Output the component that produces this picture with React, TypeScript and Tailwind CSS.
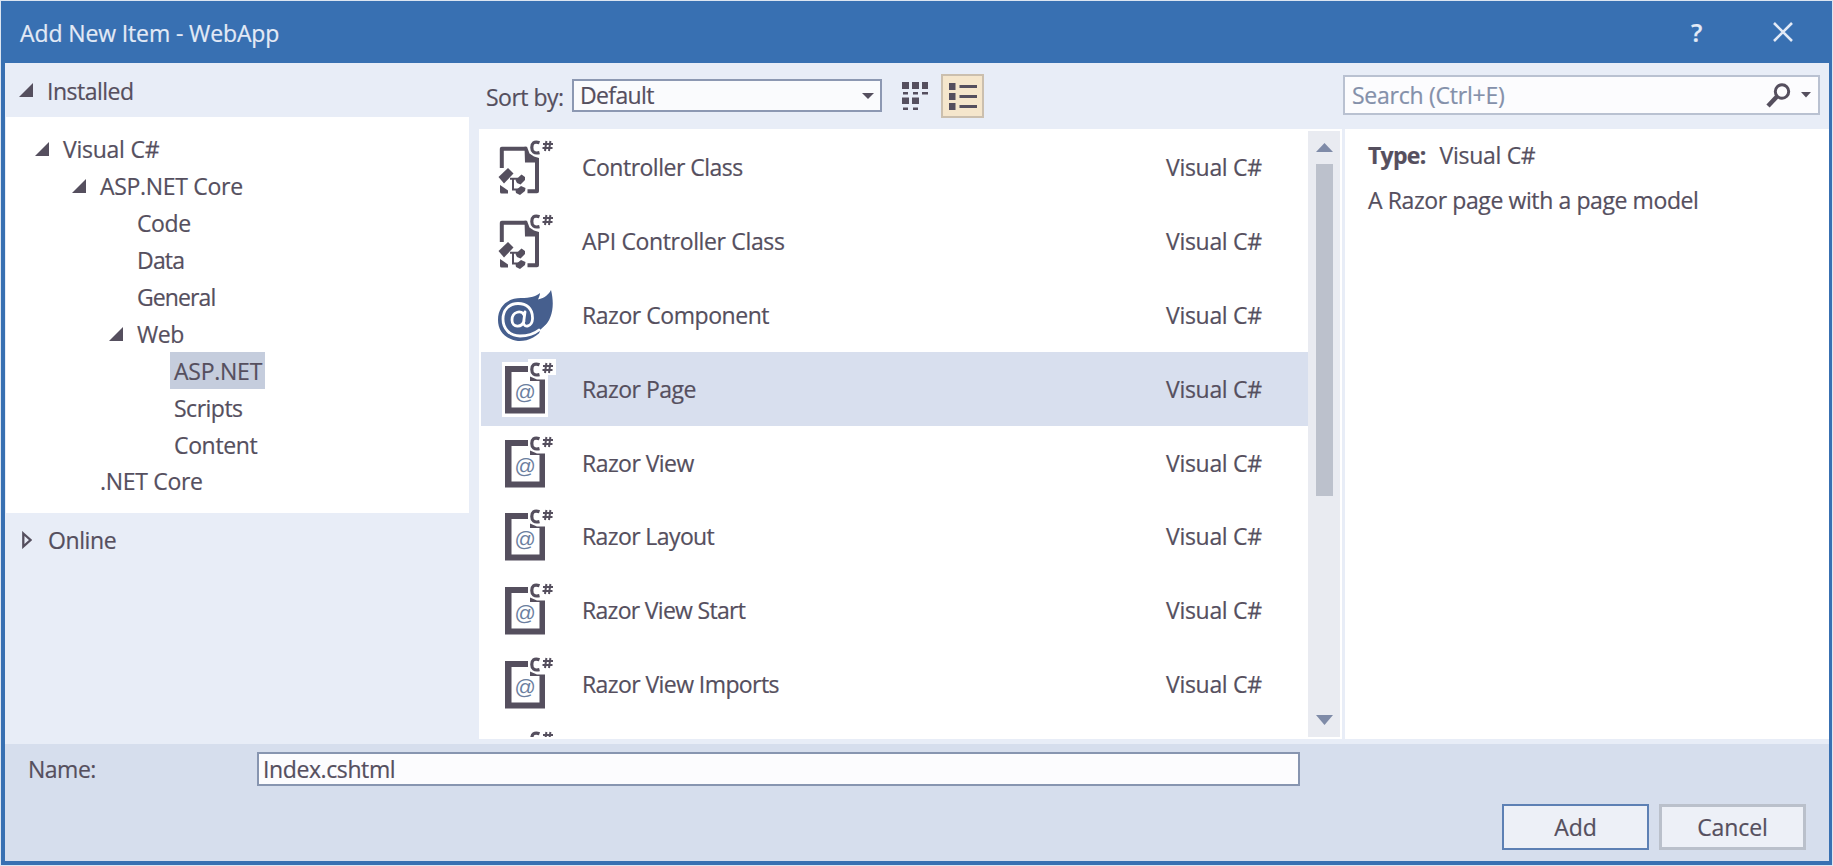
import React from "react";

const INK = "#554f5e";

function Expanded() {
  return (
    <svg className="block h-[14px] w-[14px] shrink-0" viewBox="0 0 14 14">
      <path d="M14 0V14H0Z" fill={INK} />
    </svg>
  );
}

function CSharp() {
  return (
    <g stroke={INK} fill="none">
      <path d="M45.500 11.700C40 9.700 37.800 12.500 37.800 16.500S40 23 45.500 21.600" strokeWidth="3.200" />
      <path d="M52.400 10L51 20M56.400 10L55 20M49 12.900H59M48.500 17H58.500" strokeWidth="2" />
    </g>
  );
}

function ControllerIcon() {
  return (
    <svg className="block h-[73px] w-[64px]" viewBox="0 0 64 73">
      <path d="M7.800 37V17.800H32" fill="none" stroke={INK} strokeWidth="4" strokeLinejoin="round" />
      <path d="M30.500 15.800H33L35.500 22.500L40 25.500L45 27V31.500H31Z" fill={INK} />
      <path d="M43 29V60.300H33.500" fill="none" stroke={INK} strokeWidth="4" strokeLinejoin="round" />
      <path d="M6 54L9 56L14 59.500V62.500H7.500Q6 62.500 6 61Z" fill={INK} />
      <path d="M4.500 46L14 37L19.500 42.500L10 52.500Z" fill={INK} />
      <path d="M16 47.800H24M19 48V58.500H25" fill="none" stroke={INK} strokeWidth="2" />
      <path d="M21.500 49L27.500 43.500L31 46V49L26.500 53.500L23 52ZM21.500 59.500L27 55L31.500 57L31 60L26 64L22 62Z" fill={INK} />
      <CSharp />
    </svg>
  );
}

function ComponentIcon() {
  return (
    <svg className="block h-[73px] w-[64px]" viewBox="0 0 64 73">
      <path
        d="M57 11C61 27 58 40 50 48C44 58 34 62.500 24 62C11 60 4 52 4 41C4 27 14 19 27 19C36 19 43 17 46 14C46 16 45 18 44 20.500C51 19 55 15 57 11Z"
        fill="#465f8e"
      />
      <g fill="none" stroke="#fff" strokeWidth="2.800" strokeLinecap="round">
        <path d="M30 36C28 31 18 32 18 41C18 49 28 49 30 42M31 33L29.500 44C30 49 38 48 38.500 40C39 29 32 24.500 24 24.500C15 24.500 9 31 9 40C9 50 16 57 26 57C34 57 40 55 45 51" />
      </g>
      <path d="M57 41C54 49 49 53 45 56L46 51Z" fill="#fff" />
    </svg>
  );
}

function PageIcon({ halo = false }: { halo?: boolean }) {
  return (
    <svg className="block h-[73px] w-[64px]" viewBox="0 0 64 73">
      {halo && <path d="M8 9H34V6H62V22H54V64H8Z" fill="#fff" />}
      <path d="M34 13H11V60.500H51V26.500H43L36 23.500V28H45.500V54.500H17.500V19H34Z" fill={INK} />
      <text x="20.500" y="45.500" fontSize="21" fill="#6c7f9f" fontFamily="Liberation Sans, sans-serif">@</text>
      <CSharp />
    </svg>
  );
}

function PlainIcon() {
  return (
    <svg className="block h-[73px] w-[64px]" viewBox="0 0 64 73">
      <CSharp />
    </svg>
  );
}

const items = [
  { name: "Controller Class", icon: "controller", track: "tracking-[-0.500px]" },
  { name: "API Controller Class", icon: "controller", track: "tracking-[-0.350px]" },
  { name: "Razor Component", icon: "component", track: "tracking-[-0.450px]" },
  { name: "Razor Page", icon: "page", selected: true, track: "tracking-[-0.500px]" },
  { name: "Razor View", icon: "page", track: "tracking-[-0.550px]" },
  { name: "Razor Layout", icon: "page", track: "tracking-[-0.600px]" },
  { name: "Razor View Start", icon: "page", track: "tracking-[-0.700px]" },
  { name: "Razor View Imports", icon: "page", track: "tracking-[-0.580px]" },
  { name: "", icon: "plain", track: "" },
];

const tree = [
  { label: "Visual C#", pad: "pl-[29px]", open: true, track: "tracking-[-0.250px]" },
  { label: "ASP.NET Core", pad: "pl-[66px]", open: true, track: "tracking-[-0.300px]" },
  { label: "Code", pad: "pl-[131px]", track: "tracking-[-0.400px]" },
  { label: "Data", pad: "pl-[131px]", track: "tracking-[-0.800px]" },
  { label: "General", pad: "pl-[131px]", track: "tracking-[-0.900px]" },
  { label: "Web", pad: "pl-[103px]", open: true, track: "tracking-[-0.500px]" },
  { label: "ASP.NET", pad: "pl-[164px]", selected: true, track: "" },
  { label: "Scripts", pad: "pl-[168px]", track: "tracking-[-0.500px]" },
  { label: "Content", pad: "pl-[168px]", track: "tracking-[-0.350px]" },
  { label: ".NET Core", pad: "pl-[94px]", track: "tracking-[-0.300px]" },
];

function TitleBar() {
  return (
    <header className="flex h-[62px] shrink-0 items-center bg-[#3870b2] pl-[19px] text-[#e3eaf6]">
      <span className="grow pt-px tracking-[-0.120px]">Add New Item - WebApp</span>
      <span className="w-[82px] pb-[1px] text-[25px] font-semibold">?</span>
      <svg className="mr-[39px] block h-[20px] w-[20px]" viewBox="0 0 20 20">
        <path d="M1 1L19 19M19 1L1 19" stroke="currentColor" strokeWidth="2.600" />
      </svg>
    </header>
  );
}

function Sidebar() {
  return (
    <aside className="flex w-[463px] shrink-0 flex-col">
      <div className="flex h-[54px] items-center gap-[14px] pl-[13px]">
        <Expanded />
        <span className="pt-[2px]">Installed</span>
      </div>
      <div className="flex h-[396px] flex-col bg-white pt-[14px]">
        {tree.map((n) => (
          <div key={n.label} className={`flex h-[36.900px] shrink-0 items-center gap-[14px] ${n.pad}`}>
            {n.open && <Expanded />}
            <span className={n.selected ? "flex h-[37px] w-[95px] items-center bg-[#c5cddd] pl-[4px] tracking-[-0.250px]" : n.track}>{n.label}</span>
          </div>
        ))}
      </div>
      <div className="flex h-[54px] items-center gap-[16px] pl-[16px]">
        <svg className="block h-[18px] w-[10px]" viewBox="0 0 10 18">
          <path d="M1.300 2.500L8.500 9L1.300 15.500Z" fill="none" stroke={INK} strokeWidth="2.300" />
        </svg>
        <span className="tracking-[-0.400px]">Online</span>
      </div>
    </aside>
  );
}

function Toolbar() {
  return (
    <div className="flex h-[66px] shrink-0">
      <span className="mt-[18px] w-[93px] shrink-0 pl-[7px]">Sort by:</span>
      <div className="mt-[16px] flex h-[33px] w-[310px] shrink-0 items-center justify-between border-2 border-[#8c98b2] bg-[#fafbfd] pr-[6px] pl-[6px]">
        <span className="pb-[1px] tracking-[-0.650px]">Default</span>
        <svg className="block h-[6px] w-[12px]" viewBox="0 0 12 6"><path d="M0 0H12L6 6Z" fill={INK} /></svg>
      </div>
      <svg className="mt-[19px] ml-[20px] block h-[28px] w-[27px]" viewBox="0 0 27 28" fill={INK}>
        <path d="M0 0H7V7H0ZM10 0H17V7H10ZM20 0H26V7H20ZM1 10H6V12.500H1ZM11 10H16V12.500H11ZM20 10H26V12.500H20ZM0 15.500H7V22H0ZM10 15.500H17V22H10ZM1 25.500H6V28H1ZM11 25.500H16V28H11Z" />
      </svg>
      <div className="mt-[11px] ml-[12px] flex h-[44px] w-[43px] items-center justify-center border-2 border-[#cbbfae] bg-[#f5e6cc]">
        <svg className="block h-[27px] w-[28px]" viewBox="0 0 28 27" fill={INK}>
          <path d="M0 0H6.500V7H0ZM0 10H6.500V17H0ZM0 20H6.500V27H0ZM10.500 2H28V5H10.500ZM10.500 12H28V15H10.500ZM10.500 22H28V25H10.500Z" />
        </svg>
      </div>
    </div>
  );
}

function ItemList() {
  return (
    <div className="flex h-[610px] w-[863px] bg-white pt-[2px] pl-[2px]">
      <div className="flex h-[606px] w-[827px] shrink-0 flex-col overflow-hidden">
        {items.map((it) => (
          <div key={it.name} className={`flex h-[73.800px] shrink-0 items-center ${it.selected ? "bg-[#d8dfee]" : ""}`}>
            <div className="w-[101px] shrink-0 pl-[13px]">
              {it.icon === "controller" && <ControllerIcon />}
              {it.icon === "component" && <ComponentIcon />}
              {it.icon === "page" && <PageIcon halo={it.selected} />}
              {it.icon === "plain" && <PlainIcon />}
            </div>
            <span className={`w-[584px] pb-[1px] ${it.track}`}>{it.name}</span>
            {it.name && <span className="pb-[1px] tracking-[-0.300px]">Visual C#</span>}
          </div>
        ))}
      </div>
      <div className="flex h-[606px] w-[32px] flex-col items-center bg-[#e9ebf1] pt-[12px] pb-[12px]">
        <svg className="block h-[9px] w-[17px]" viewBox="0 0 17 9"><path d="M0 9H17L8.500 0Z" fill="#7f8ba8" /></svg>
        <div className="mt-[12px] h-[332px] w-[17px] bg-[#bcc1cc]" />
        <svg className="mt-auto block h-[10px] w-[17px]" viewBox="0 0 17 10"><path d="M0 0H17L8.500 10Z" fill="#7f8ba8" /></svg>
      </div>
    </div>
  );
}

function Details() {
  return (
    <section className="flex grow flex-col">
      <div className="mt-[12px] flex h-[40px] w-[477px] items-center border-2 border-[#b9c1d1] bg-[#fcfcfe] pl-[7px]">
        <span className="grow tracking-[-0.250px] text-[#8490aa]">Search (Ctrl+E)</span>
        <svg className="block h-[25px] w-[25px]" viewBox="0 0 25 25" fill="none" stroke={INK}>
          <circle cx="16" cy="8.500" r="6.700" strokeWidth="3" />
          <path d="M11 13.500L2 23" strokeWidth="4.500" />
        </svg>
        <svg className="mr-[7px] ml-[10px] block h-[6px] w-[10px]" viewBox="0 0 10 6"><path d="M0 0H10L5 5.500Z" fill={INK} /></svg>
      </div>
      <div className="mt-[14px] ml-[2px] flex h-[610px] flex-col bg-white pt-[10px] pl-[23px]">
        <div className="flex gap-[14px]"><span className="font-bold tracking-[-0.700px]">Type:</span><span className="tracking-[-0.300px]">Visual C#</span></div>
        <p className="mt-[13px] tracking-[-0.400px]">A Razor page with a page model</p>
      </div>
    </section>
  );
}

function Footer() {
  return (
    <footer className="flex h-[117px] shrink-0 flex-col bg-[#d6deed] pt-[8px]">
      <div className="flex h-[34px]">
        <label className="w-[252px] pt-px pl-[23px]">Name:</label>
        <div className="flex w-[1043px] items-center border-2 border-[#8795b0] bg-[#fcfcfe] pb-[1px] pl-[4px] tracking-[-0.400px]">Index.cshtml</div>
      </div>
      <div className="mt-[18px] flex justify-end gap-[10px] pr-[23px] tracking-normal">
        <button className="h-[46px] w-[147px] border-2 border-[#5d80b4] bg-[#edf0f7] pb-[1px]">Add</button>
        <button className="h-[46px] w-[147px] border-[3px] border-[#bac0cb] bg-[#edf0f7] pb-[1px] tracking-[-0.100px]">Cancel</button>
      </div>
    </footer>
  );
}

export default function App() {
  return (
    <div className="h-[866px] w-[1833px] overflow-hidden bg-[#dce5f1] p-px font-['Open_Sans',sans-serif] text-[23px] leading-[32px] tracking-[-0.500px] whitespace-nowrap text-[#554f5e] [-webkit-text-stroke:0.2px_currentColor]">
      <div className="flex h-[864px] w-[1831px] flex-col bg-[#3870b2]">
        <TitleBar />
        <div className="mx-[4px] mr-[3px] flex h-[798px] flex-col bg-[#e8edf7]">
          <div className="flex h-[681px] shrink-0">
            <div className="w-px shrink-0" />
            <Sidebar />
            <div className="ml-[10px] flex w-[864px] shrink-0 flex-col">
              <Toolbar />
              <ItemList />
            </div>
            <Details />
          </div>
          <Footer />
        </div>
      </div>
    </div>
  );
}
